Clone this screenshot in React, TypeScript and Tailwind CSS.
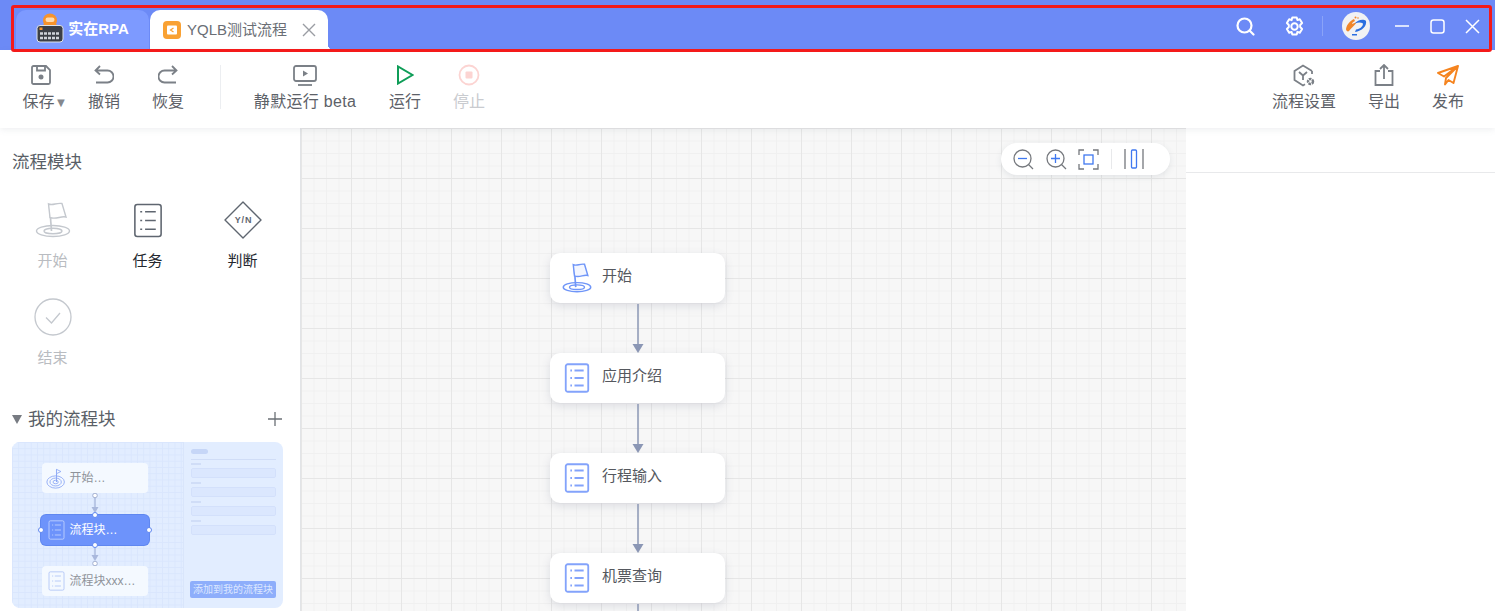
import type { ReactNode } from 'react';

const FONT = "font-['Liberation_Sans','Noto_Sans_CJK_SC',sans-serif]";

function Flag({ color = '#c4c8ce', className = '', fill = '#fff', width = 1.4 }: { color?: string; className?: string; fill?: string; width?: number }) {
	return (
		<svg className={className} viewBox="0 0 36 36" fill="none" stroke={color} strokeWidth={width}>
			<ellipse cx="18" cy="29" rx="16.5" ry="5.5" />
			<ellipse cx="18" cy="29" rx="9" ry="2.8" />
			<path d="M16.500 29 L14.500 3" strokeWidth={width + 0.3} />
			<path d="M13.500 2 C18 4 21 0.500 27 1.500 L31 15 C26 13.500 21 18 15 15.500 Z" fill={fill} />
		</svg>
	);
}

function TargetFlag({ className = '' }: { className?: string }) {
	return (
		<svg className={className} viewBox="0 0 24 24" fill="none" stroke="#8da8f5" strokeWidth={1}>
			<ellipse cx="11" cy="16" rx="10" ry="7" />
			<ellipse cx="11" cy="16" rx="6.500" ry="4.500" />
			<ellipse cx="11" cy="16" rx="3" ry="2" />
			<path d="M12 16V1.500" strokeWidth={1.200} />
			<path d="M12 1.500l5 2.500-5 2.500z" fill="#f4f9ff" />
		</svg>
	);
}

function ListIcon({ color, className = '', width = 1.6 }: { color: string; className?: string; width?: number }) {
	return (
		<svg className={className} viewBox="0 0 30 36" fill="none" stroke={color}>
			<rect x="1.500" y="1.500" width="27" height="33" rx="2.500" strokeWidth={width} />
			<path d="M7 9h2M12 9h11M7 18h2M12 18h11M7 27h2M12 27h11" strokeWidth={width} />
		</svg>
	);
}

function ToolItem({ icon, label, muted, width }: { icon: ReactNode; label: ReactNode; muted?: boolean; width: string }) {
	return (
		<div className={`flex flex-col items-center ${width}`}>
			<div className="flex h-[24px] items-center justify-center">{icon}</div>
			<div className={`mt-[3px] text-[16px] leading-[24px] whitespace-nowrap ${muted ? 'text-[#c9cbcf]' : 'text-[#5d6168]'}`}>{label}</div>
		</div>
	);
}

function PaletteItem({ icon, label, muted }: { icon: ReactNode; label: string; muted?: boolean }) {
	return (
		<div className="flex h-[97px] flex-col items-center">
			<div className="flex h-[40px] w-[40px] items-center justify-center">{icon}</div>
			<div className={`mt-[10px] text-[15px] leading-[22px] ${muted ? 'text-[#b9bcc1]' : 'text-[#23272e]'}`}>{label}</div>
		</div>
	);
}

function FlowNode({ icon, label }: { icon: ReactNode; label: string }) {
	return (
		<div className="flex h-[50px] w-[175px] items-center rounded-[10px] bg-white shadow-[0_3px_10px_rgba(80,90,120,0.16)]">
			<div className="flex w-[52px] justify-start pl-[14px]">{icon}</div>
			<div className="mb-[4px] text-[15px] text-[#55585e]">{label}</div>
		</div>
	);
}

function Connector() {
	return (
		<svg className="h-[50px] w-[14px]" viewBox="0 0 14 50">
			<path d="M7 1v42" stroke="#8b97b5" strokeWidth={1.500} />
			<path d="M1.500 41h11L7 50z" fill="#8b97b5" />
		</svg>
	);
}

function MiniConnector() {
	return (
		<svg className="h-[22px] w-[12px]" viewBox="0 0 12 22" fill="none">
			<path d="M6 4v14" stroke="#a9b8dc" strokeWidth={1.400} />
			<path d="M2.500 14h7L6 20z" fill="#a9b8dc" />
			<circle cx="6" cy="2.500" r="2.300" fill="#fff" stroke="#a3b0d0" />
		</svg>
	);
}

function MiniConnectorDown() {
	return (
		<svg className="h-[21px] w-[12px]" viewBox="0 0 12 21" fill="none">
			<path d="M6 0v14" stroke="#a9b8dc" strokeWidth={1.400} />
			<path d="M2.500 10h7L6 16z" fill="#a9b8dc" />
			<circle cx="6" cy="18.500" r="2.300" fill="#fff" stroke="#a3b0d0" />
		</svg>
	);
}

function MiniField() {
	return (
		<div className="mb-[4px]">
			<div className="mb-[3px] h-[2px] w-[10px] bg-[#d0ddf7]" />
			<div className="h-[10px] rounded-[2px] border border-[#d3e0fb] bg-[#dbe7fe]" />
		</div>
	);
}

function Handle({ className }: { className: string }) {
	return <span className={`absolute h-[6px] w-[6px] rounded-full border border-[#5f87f0] bg-white ${className}`} />;
}

function BlockPreview() {
	return (
		<div className="flex h-[166px] w-[271px] overflow-hidden rounded-lg bg-[#e2edff]">
			<div className="flex w-[172px] flex-col items-center border-r border-[#d9e5fb] pt-[21px] pr-[6px] bg-[linear-gradient(#d9e6fd_1px,transparent_1px),linear-gradient(90deg,#d9e6fd_1px,transparent_1px)] bg-[size:6.250px_6.250px]">
				<div className="flex h-[30px] w-[106px] items-center rounded-[4px] bg-[#f4f9ff] pl-[4px] text-[12px] text-[#8f939a]">
					<TargetFlag className="mr-[3px] h-[21px] w-[21px]" />
					开始…
				</div>
				<MiniConnector />
				<div className="relative flex h-[30px] w-[108px] items-center rounded-[5px] bg-[#6d93fb] pl-[7px] text-[12px] text-white shadow-[0_0_0_1px_#5f87f0]">
					<ListIcon color="#dbe6ff" width={1.200} className="mr-[5px] h-[20px] w-[17px]" />
					流程块…
					<Handle className="-top-[3px] left-1/2 -translate-x-1/2" />
					<Handle className="-bottom-[3px] left-1/2 -translate-x-1/2" />
					<Handle className="top-1/2 -left-[3px] -translate-y-1/2" />
					<Handle className="top-1/2 -right-[3px] -translate-y-1/2" />
				</div>
				<MiniConnectorDown />
				<div className="flex h-[30px] w-[106px] items-center rounded-[4px] bg-[#f4f9ff] pl-[6px] text-[12px] whitespace-nowrap text-[#8f939a]">
					<ListIcon color="#9db5f5" width={1.200} className="mr-[5px] h-[20px] w-[17px]" />
					流程块xxx…
				</div>
			</div>
			<div className="flex flex-1 flex-col px-[7px] pt-[7px]">
				<div className="h-[5px] w-[17px] rounded-full bg-[#c6d6f7]" />
				<div className="mt-[5px] mb-[3px] h-px bg-[#d0ddf7]" />
				<MiniField />
				<MiniField />
				<MiniField />
				<MiniField />
				<div className="mt-[42px] -ml-[1px] flex h-[17px] w-[86px] items-center justify-center rounded-[2px] bg-[#8eaefb] text-[10px] whitespace-nowrap text-[#dce7ff]">
					添加到我的流程块
				</div>
			</div>
		</div>
	);
}

export default function App() {
	return (
		<div className={`relative flex h-[611px] w-[1495px] flex-col overflow-hidden bg-white ${FONT}`}>
			{/* Title bar */}
			<div className="flex h-[50px] items-end bg-[#6c8af6] pl-[16px]">
				<div className="flex h-[40px] w-[133px] items-center justify-center rounded-t-[10px] bg-[#7d9aff] pb-[1px]">
					<svg className="mr-[4px] -mt-[3px] h-[30px] w-[28px]" viewBox="0 0 28 30">
						<circle cx="14" cy="7.500" r="7" fill="#f6932b" />
						<path d="M5 14l4-4h10l4 4z" fill="#f6932b" />
						<rect x="9.500" y="4.500" width="9" height="4.500" rx="2.200" fill="#ffdcae" />
						<rect x="1" y="12.500" width="26" height="16.500" rx="3" fill="#3b3f46" stroke="#dfe3ea" />
						<rect x="3.500" y="14.500" width="3" height="2.500" fill="#f6932b" />
						<path d="M4 20.500h20M4 25h20" stroke="#cfd3d9" strokeWidth={2.400} strokeDasharray="3 1" />
					</svg>
					<span className="text-[15px] font-bold text-white">实在RPA</span>
				</div>
				<div className="relative ml-[1px] flex h-[40px] w-[178px] items-center rounded-t-[10px] bg-white pl-[13px]">
					<svg className="h-[18px] w-[18px]" viewBox="0 0 18 18">
						<rect width="18" height="18" rx="4" fill="#f9a133" />
						<rect x="4" y="4.500" width="10" height="9" rx="1" fill="#fff" />
						<path d="M10.500 7 7.500 9l3 2" fill="none" stroke="#f9a133" strokeWidth={1.200} />
					</svg>
					<span className="ml-[6px] text-[15px] whitespace-nowrap text-[#6a6e75]">YQLB测试流程</span>
					<svg className="ml-[15px] h-[14px] w-[14px]" viewBox="0 0 14 14" stroke="#9a9da3" strokeWidth={1.400}>
						<path d="M1 1l12 12M13 1 1 13" />
					</svg>
					<span className="absolute bottom-0 -right-[6px] h-[6px] w-[6px] bg-[radial-gradient(circle_at_100%_0,transparent_6px,#fff_6.500px)]" />
				</div>
				<div className="flex-1" />
				<div className="flex h-[50px] items-center pr-[15px] pt-[2px]">
					<svg className="h-[20px] w-[20px]" viewBox="0 0 20 20" fill="none" stroke="#fff" strokeWidth={2.200}>
						<circle cx="9.500" cy="9.500" r="7" />
						<path d="m14.500 14.500 4 4" strokeLinecap="round" />
					</svg>
					<svg className="ml-[29px] h-[21px] w-[21px]" viewBox="0 0 21 21" fill="none" stroke="#fff" strokeWidth={2}>
						<path d="M8.300 1.500h4.400l.7 2.600 2.400-.9 2.300 3.900-1.900 1.800v2.200l1.900 1.800-2.300 3.900-2.400-.9-.7 2.600H8.300l-.7-2.600-2.400.9-2.300-3.900 1.900-1.800V8.900L2.900 7.100l2.300-3.900 2.400.9z" strokeLinejoin="round" />
						<circle cx="10.500" cy="10.500" r="3.200" />
					</svg>
					<div className="ml-[17px] mr-[19px] h-[20px] w-px bg-[#8aa3f8]" />
					<svg className="h-[28px] w-[28px]" viewBox="0 0 28 28" fill="none">
						<circle cx="14" cy="14" r="14" fill="#f1f2f4" />
						<path d="M4 17c1-5 4-8 8-10l1 2c-2 1-3 2-3 3l5-2c-3 4-6 6-8 9-1 1-3 0-3-2z" fill="#f0862a" />
						<path d="M24 9c1 5-4 10-11 11l1-2.500c4-.5 7-3 7-6-2-1.500-5-1.500-8 0 2-3 8-5 11-2.500z" fill="#2a6fe0" />
						<path d="M10 22h5v1.500h-5z" fill="#2a6fe0" />
						<circle cx="13.500" cy="5.500" r="1" fill="#f0862a" />
						<circle cx="16" cy="6" r="0.800" fill="#f0862a" />
					</svg>
					<svg className="ml-[25px] h-[14px] w-[14px]" viewBox="0 0 14 14" stroke="#fff" strokeWidth={1.500}>
						<path d="M0 7h14" />
					</svg>
					<svg className="ml-[21px] h-[15px] w-[15px]" viewBox="0 0 15 15" fill="none" stroke="#fff" strokeWidth={1.500}>
						<rect x="1" y="1" width="13" height="13" rx="2.500" />
					</svg>
					<svg className="ml-[20px] h-[15px] w-[15px]" viewBox="0 0 15 15" stroke="#fff" strokeWidth={1.500}>
						<path d="M1 1l13 13M14 1 1 14" />
					</svg>
				</div>
			</div>

			{/* Toolbar */}
			<div className="relative z-10 flex h-[78px] items-start bg-white pt-[13px] pl-[9px] pr-[15px] shadow-[0_2px_6px_rgba(120,130,150,0.12)]">
				<ToolItem
					width="w-[64px]"
					label={
						<span className="ml-[8px]">
							保存<span className="text-[13px] text-[#85888e]">▼</span>
						</span>
					}
					icon={
						<svg className="h-[20px] w-[20px]" viewBox="0 0 20 20" fill="none" stroke="#7b8087" strokeWidth={1.800}>
							<path d="M2.500 1h12.500l4 4v12.500a1.500 1.500 0 0 1-1.500 1.500h-15A1.500 1.500 0 0 1 1 17.500V2.500A1.500 1.500 0 0 1 2.500 1z" />
							<path d="M6 1v4.500h8V1" />
							<circle cx="10" cy="12" r="1.600" fill="#7b8087" />
						</svg>
					}
				/>
				<ToolItem
					width="w-[62px]"
					label="撤销"
					icon={
						<svg className="h-[20px] w-[20px]" viewBox="0 0 20 20" fill="none" stroke="#7b8087" strokeWidth={1.800}>
							<path d="M6 1 1.500 5.500 6 9.500M2 5.500h11.500a5.500 5.500 0 0 1 0 12H2" />
						</svg>
					}
				/>
				<ToolItem
					width="w-[66px]"
					label="恢复"
					icon={
						<svg className="h-[20px] w-[20px]" viewBox="0 0 20 20" fill="none" stroke="#7b8087" strokeWidth={1.800}>
							<path d="M14 1l4.500 4.500L14 9.500M18 5.500H6.500a5.500 5.500 0 0 0 0 12H18" />
						</svg>
					}
				/>
				<div className="ml-[19px] mt-[2px] h-[44px] w-px bg-[#eceef1]" />
				<ToolItem
					width="w-[168px]"
					label={<span className="tracking-[0.3px]">静默运行 beta</span>}
					icon={
						<svg className="h-[21px] w-[24px]" viewBox="0 0 24 21" fill="none" stroke="#7b8087" strokeWidth={1.800}>
							<rect x="1" y="1" width="22" height="15" rx="2" />
							<path d="M5 20h14" />
							<path d="M10 5.500v6l5-3z" fill="#7b8087" stroke="none" />
						</svg>
					}
				/>
				<ToolItem
					width="w-[32px]"
					label="运行"
					icon={
						<svg className="h-[20px] w-[18px]" viewBox="0 0 18 20" fill="none" stroke="#0f9d58" strokeWidth={2}>
							<path d="M2 1.500v17L16.500 10z" />
						</svg>
					}
				/>
				<div className="w-[32px]" />
				<ToolItem
					width="w-[32px]"
					label="停止"
					muted
					icon={
						<svg className="h-[22px] w-[22px]" viewBox="0 0 22 22" fill="none">
							<circle cx="11" cy="11" r="9.500" stroke="#fcd4d2" strokeWidth={1.800} />
							<rect x="7.500" y="7.500" width="7" height="7" rx="1" fill="#fcd4d2" />
						</svg>
					}
				/>
				<div className="flex-1" />
				<ToolItem
					width="w-[64px]"
					label="流程设置"
					icon={
						<svg className="h-[24px] w-[24px]" viewBox="0 0 24 24" fill="none" stroke="#7b8087" strokeWidth={1.800}>
							<path d="M20 8 11 2.500 2.500 8v9L11 22.500l2-1.200M20 8v3" />
							<path d="M7 9l4 3.500L15 9M11 12.500V17" />
							<circle cx="18.500" cy="18.500" r="2.500" strokeWidth={2.500} strokeDasharray="2.500 0.800" />
						</svg>
					}
				/>
				<div className="w-[16px]" />
				<ToolItem
					width="w-[64px]"
					label="导出"
					icon={
						<svg className="h-[22px] w-[20px]" viewBox="0 0 20 22" fill="none" stroke="#7b8087" strokeWidth={1.800}>
							<path d="M6 7H1.500v14h17V7H14" />
							<path d="M10 15V1.500M6 5l4-4 4 4" />
						</svg>
					}
				/>
				<ToolItem
					width="w-[64px]"
					label="发布"
					icon={
						<svg className="h-[21px] w-[22px]" viewBox="0 0 22 21" fill="none" stroke="#f5841f" strokeWidth={1.900} strokeLinejoin="round">
							<path d="M21 1 1 8l6 3.500L21 1 9 13l-1 6.500 3.500-4.500 5 3z" />
						</svg>
					}
				/>
			</div>

			<div className="flex min-h-0 flex-1">
				{/* Sidebar */}
				<div className="w-[301px] shrink-0 border-r border-[#e2e4e7] bg-white pt-[21px]">
					<div className="pl-[12px] text-[17.500px] leading-[26px] text-[#5a5f67]">流程模块</div>
					<div className="mt-[25px] ml-[5px] grid w-[285px] grid-cols-3">
						<PaletteItem muted label="开始" icon={<Flag className="h-[36px] w-[36px]" />} />
						<PaletteItem label="任务" icon={<ListIcon color="#5f6670" className="h-[35px] w-[30px]" />} />
						<PaletteItem
							label="判断"
							icon={
								<svg className="h-[38px] w-[38px]" viewBox="0 0 38 38" fill="none">
									<path d="M19 1 37 19 19 37 1 19z" stroke="#5f6670" strokeWidth={1.400} strokeLinejoin="round" />
									<text x="19.500" y="22.300" textAnchor="middle" fontSize="9" fontWeight="700" letterSpacing="0.8" fill="#5f6670">
										Y/N
									</text>
								</svg>
							}
						/>
						<PaletteItem
							muted
							label="结束"
							icon={
								<svg className="h-[38px] w-[38px]" viewBox="0 0 38 38" fill="none" stroke="#c4c8ce" strokeWidth={1.300}>
									<circle cx="19" cy="19" r="18" />
									<path d="M12 19.500l5.500 5.500L26 15" />
								</svg>
							}
						/>
					</div>
					<div className="mt-[13px] flex h-[24px] items-center pl-[12px] pr-[18px]">
						<span className="mr-[6px] h-0 w-0 border-x-[5px] border-t-[9px] border-x-transparent border-t-[#777b82]" />
						<span className="text-[17.500px] text-[#5a5f67]">我的流程块</span>
						<span className="flex-1" />
						<svg className="h-[14px] w-[14px]" viewBox="0 0 14 14" stroke="#6b7076" strokeWidth={1.300}>
							<path d="M7 0v14M0 7h14" />
						</svg>
					</div>
					<div className="mt-[11px] ml-[12px]">
						<BlockPreview />
					</div>
				</div>

				{/* Canvas */}
				<div className="relative w-[885px] shrink-0 overflow-hidden bg-[#f7f7f7] bg-[linear-gradient(#e6e6e6_1px,transparent_1px),linear-gradient(90deg,#e6e6e6_1px,transparent_1px),linear-gradient(#f0f0f0_1px,transparent_1px),linear-gradient(90deg,#f0f0f0_1px,transparent_1px)] bg-[size:50px_50px,50px_50px,12.500px_12.500px,12.500px_12.500px]">
					<div className="ml-[249px] flex w-[175px] flex-col items-center pt-[125px]">
						<FlowNode label="开始" icon={<Flag color="#6f95f8" fill="#f3f6ff" width={1.700} className="h-[30px] w-[30px] -ml-[2px]" />} />
						<Connector />
						<FlowNode label="应用介绍" icon={<ListIcon color="#83a3fb" width={2.200} className="h-[30px] w-[26px]" />} />
						<Connector />
						<FlowNode label="行程输入" icon={<ListIcon color="#83a3fb" width={2.200} className="h-[30px] w-[26px]" />} />
						<Connector />
						<FlowNode label="机票查询" icon={<ListIcon color="#83a3fb" width={2.200} className="h-[30px] w-[26px]" />} />
						<Connector />
					</div>
					{/* Zoom controls */}
					<div className="absolute top-[15px] right-[16px] flex h-[32px] w-[169px] items-center rounded-full bg-white pl-[12px] shadow-[0_2px_6px_rgba(100,110,130,0.14)]">
						<svg className="h-[21px] w-[21px]" viewBox="0 0 21 21" fill="none" stroke="#75787d" strokeWidth={1.300}>
							<circle cx="9.500" cy="9.500" r="8.500" />
							<path d="m15.500 15.500 4.500 4.500" />
							<path d="M5 9.500h9" stroke="#3f78f0" />
						</svg>
						<svg className="ml-[12px] h-[21px] w-[21px]" viewBox="0 0 21 21" fill="none" stroke="#75787d" strokeWidth={1.300}>
							<circle cx="9.500" cy="9.500" r="8.500" />
							<path d="m15.500 15.500 4.500 4.500" />
							<path d="M5 9.500h9M9.500 5v9" stroke="#3f78f0" />
						</svg>
						<svg className="ml-[11px] h-[21px] w-[21px]" viewBox="0 0 21 21" fill="none" strokeWidth={1.300}>
							<path d="M1 6V1h5M15 1h5v5M20 15v5h-5M6 20H1v-5" stroke="#75787d" />
							<rect x="6" y="6" width="9" height="9" stroke="#3f78f0" />
						</svg>
						<div className="mx-[12px] h-[20px] w-px bg-[#e8e9eb]" />
						<svg className="h-[20px] w-[20px]" viewBox="0 0 20 20" fill="none" strokeWidth={1.300}>
							<path d="M1 0v20M19 0v20" stroke="#75787d" />
							<rect x="7.500" y="1" width="5" height="18" rx="1" stroke="#3f78f0" />
						</svg>
					</div>
				</div>

				{/* Right panel */}
				<div className="flex-1 bg-white">
					<div className="h-[45px] border-b border-[#e8e9eb]" />
				</div>
			</div>

			{/* Red annotation box */}
			<div className="pointer-events-none absolute top-[5px] left-[11px] z-20 h-[47px] w-[1481px] rounded-[3px] border-[3px] border-[#f41a1a]" />
		</div>
	);
}
